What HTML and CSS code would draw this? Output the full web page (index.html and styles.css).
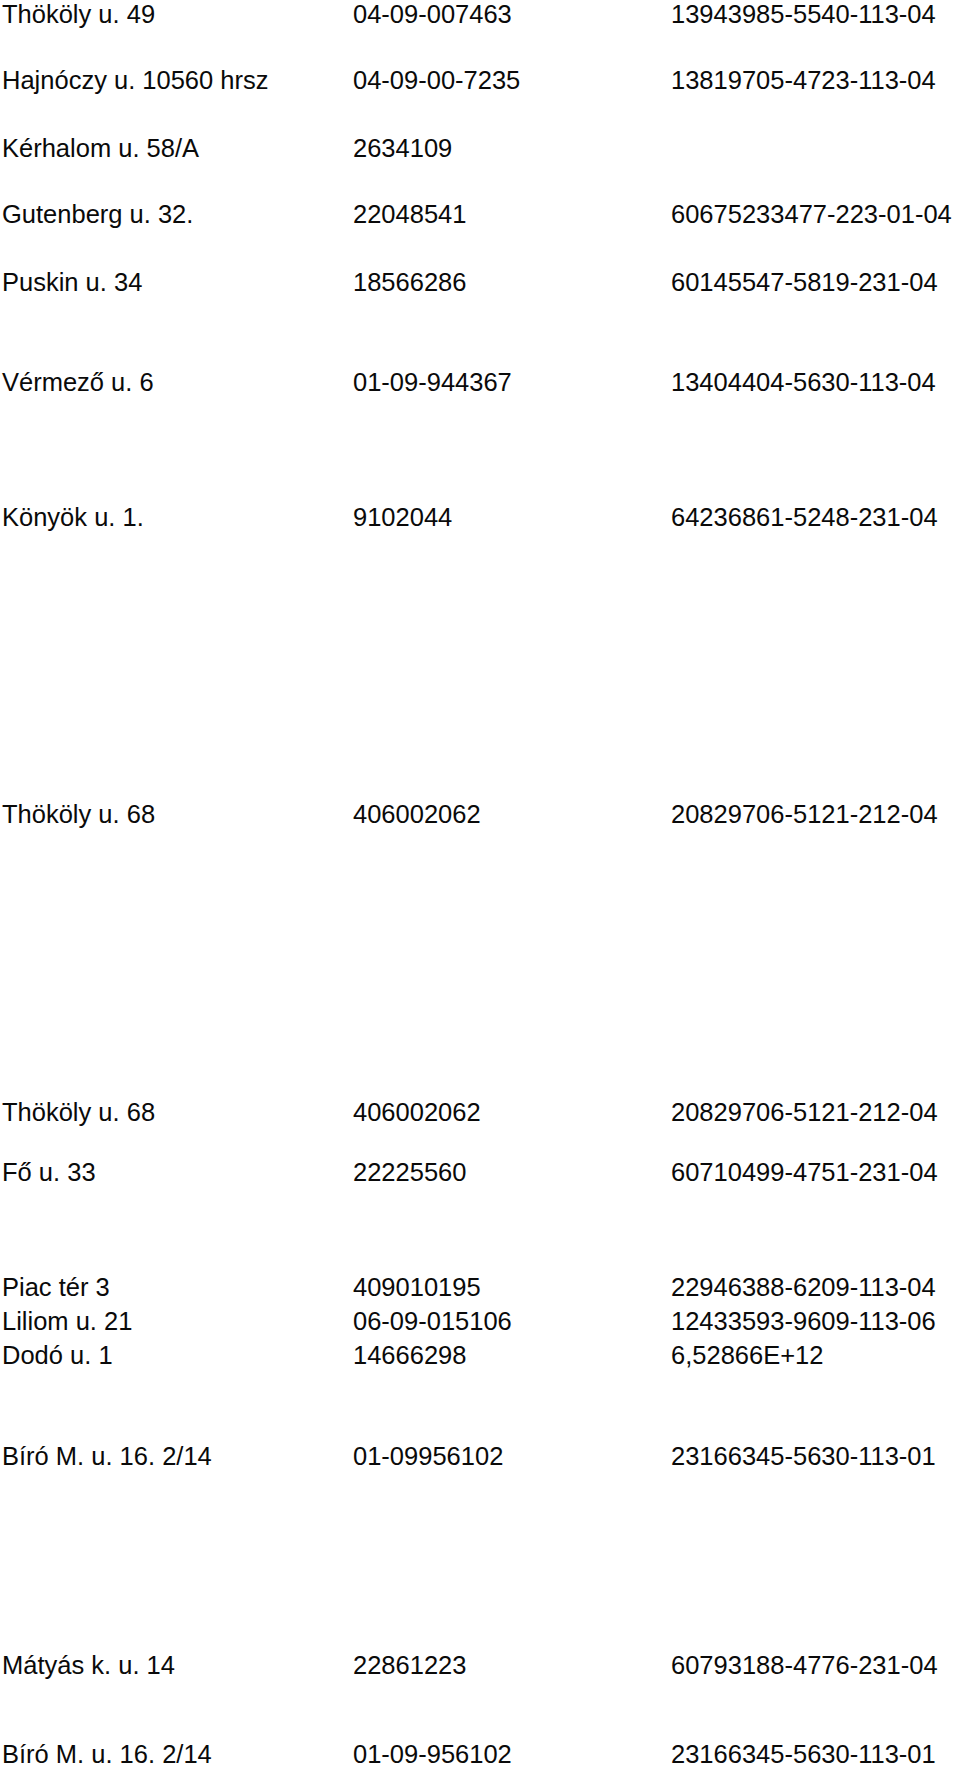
FILE: index.html
```html
<!DOCTYPE html>
<html lang="hu">
<head>
<meta charset="utf-8">
<title>Címlista</title>
<link rel="stylesheet" href="styles.css">
</head>
<body>
<div class="list">
  <div class="row"><span>Thököly u. 49</span><span>04-09-007463</span><span>13943985-5540-113-04</span></div>
  <div class="row g-a"><span>Hajnóczy u. 10560 hrsz</span><span>04-09-00-7235</span><span>13819705-4723-113-04</span></div>
  <div class="row g-b"><span>Kérhalom u. 58/A</span><span>2634109</span><span></span></div>
  <div class="row g-c"><span>Gutenberg u. 32.</span><span>22048541</span><span>60675233477-223-01-04</span></div>
  <div class="row g-d"><span>Puskin u. 34</span><span>18566286</span><span>60145547-5819-231-04</span></div>
  <div class="row g-e"><span>Vérmező u. 6</span><span>01-09-944367</span><span>13404404-5630-113-04</span></div>
  <div class="row g-f"><span>Könyök u. 1.</span><span>9102044</span><span>64236861-5248-231-04</span></div>
  <div class="row g-g"><span>Thököly u. 68</span><span>406002062</span><span>20829706-5121-212-04</span></div>
  <div class="row g-h"><span>Thököly u. 68</span><span>406002062</span><span>20829706-5121-212-04</span></div>
  <div class="row g-i"><span>Fő u. 33</span><span>22225560</span><span>60710499-4751-231-04</span></div>
  <div class="row g-j"><span>Piac tér 3</span><span>409010195</span><span>22946388-6209-113-04</span></div>
  <div class="row g-k"><span>Liliom u. 21</span><span>06-09-015106</span><span>12433593-9609-113-06</span></div>
  <div class="row g-k"><span>Dodó u. 1</span><span>14666298</span><span>6,52866E+12</span></div>
  <div class="row g-l"><span>Bíró M. u. 16. 2/14</span><span>01-09956102</span><span>23166345-5630-113-01</span></div>
  <div class="row g-m"><span>Mátyás k. u. 14</span><span>22861223</span><span>60793188-4776-231-04</span></div>
  <div class="row g-n"><span>Bíró M. u. 16. 2/14</span><span>01-09-956102</span><span>23166345-5630-113-01</span></div>
</div>
</body>
</html>
```

FILE: styles.css
```css
html, body {
  margin: 0;
  padding: 0;
  background: #ffffff;
}

body {
  font-family: "Liberation Sans", Arial, sans-serif;
  font-size: 25.5px;
  line-height: 28px;
  color: #0a0a0a;
  height: 1766px;
  overflow: hidden;
}

.list {
  padding-left: 2px;
}

.row {
  display: grid;
  grid-template-columns: 351px 318px 1fr;
  white-space: nowrap;
}

.g-a { margin-top: 38px; }
.g-b { margin-top: 40px; }
.g-c { margin-top: 38px; }
.g-d { margin-top: 40px; }
.g-e { margin-top: 72px; }
.g-f { margin-top: 107px; }
.g-g { margin-top: 269px; }
.g-h { margin-top: 270px; }
.g-i { margin-top: 32px; }
.g-j { margin-top: 87px; }
.g-k { margin-top: 6px; }
.g-l { margin-top: 73px; }
.g-m { margin-top: 181px; }
.g-n { margin-top: 61px; }
```
